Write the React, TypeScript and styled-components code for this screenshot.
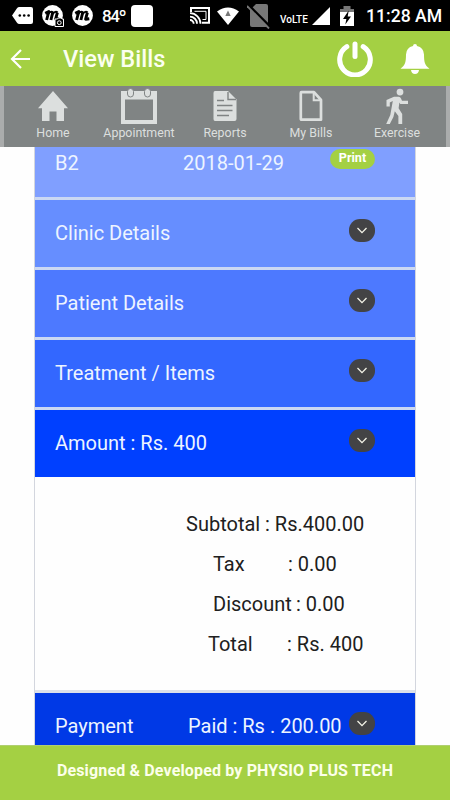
import React from 'react';
import styled, { createGlobalStyle } from 'styled-components';

const GlobalStyle = createGlobalStyle`
  * { box-sizing: border-box; }
  body { margin: 0; background: #fff; font-family: Roboto, sans-serif; }
  svg { display: block; flex: none; }
`;

const Screen = styled.div`
  width: 450px;
  height: 800px;
  display: flex;
  flex-direction: column;
  overflow: hidden;
  background: #fefefe;
`;

const StatusBar = styled.div`
  height: 31px;
  flex: none;
  display: flex;
  align-items: center;
  background: #000;
  color: #fff;
`;

const Slot = styled.div<{ $w: number; $gap: number }>`
  width: ${(p) => p.$w}px;
  margin-left: ${(p) => p.$gap}px;
  flex: none;
  white-space: nowrap;
`;

const Temperature = styled(Slot)`
  font-size: 17px;
  font-weight: 500;
  letter-spacing: -1.3px;
  line-height: 31px;
  padding-top: 2px;
`;

const Network = styled(Slot)`
  font-size: 10px;
  font-weight: 500;
  line-height: 31px;
  padding-top: 7px;
`;

const Clock = styled(Slot)`
  font-size: 17.6px;
  font-weight: 500;
  line-height: 31px;
  padding-top: 2px;
`;

const AppBar = styled.header`
  height: 55px;
  flex: none;
  display: flex;
  align-items: center;
  background: #a4d043;
  color: #fff;
  padding: 0 20px 0 10px;
`;

const Title = styled.h1`
  margin: 0 auto 0 33px;
  font-size: 23.6px;
  line-height: 54px;
  font-weight: 500;
  color: #fbfff0;
`;

const BarIcons = styled.div`
  display: flex;
  align-items: center;
  gap: 27px;
`;

const Nav = styled.nav`
  height: 61px;
  flex: none;
  display: grid;
  grid-template-columns: repeat(5, 86px);
  justify-content: center;
  background: #808484;
  border-left: 4px solid #aaacac;
  border-right: 4px solid #aaacac;
  padding: 2px 0 0;
`;

const NavItem = styled.div`
  display: flex;
  flex-direction: column;
  align-items: center;
  color: #dcdfde;
`;

const NavLabel = styled.span`
  margin-top: 1px;
  font-size: 12.4px;
  line-height: 16px;
  white-space: nowrap;
`;

const Content = styled.main`
  flex: 1;
  min-height: 0;
  overflow: hidden;
  padding: 0 34px;
`;

const BillList = styled.section`
  border: 1px solid #d3d6de;
  border-width: 0 1px;
`;

const BillRow = styled.div<{ $bg: string; $h: number; $top: number; $line?: boolean }>`
  height: ${(p) => p.$h}px;
  padding: ${(p) => p.$top}px 40px 0 20px;
  display: flex;
  align-items: flex-start;
  background: ${(p) => p.$bg};
  border-bottom: ${(p) => (p.$line ? '3px solid #cbd8f3' : 'none')};
  color: #edf4ff;
  font-size: 20px;
  line-height: 24px;
`;

const RowLabel = styled.span<{ $w?: number }>`
  width: ${(p) => (p.$w ? `${p.$w}px` : 'auto')};
  white-space: nowrap;
`;

const PrintBadge = styled.span`
  width: 45px;
  height: 20px;
  margin: -2px 0 0 auto;
  border-radius: 10px;
  background: #a4d043;
  color: #fff;
  font-size: 12.6px;
  font-weight: 700;
  line-height: 18px;
  text-align: center;
`;

const Toggle = styled.span`
  width: 26px;
  height: 23px;
  margin-left: auto;
  margin-top: -2px;
  flex: none;
  border-radius: 11px;
  background: #434345;
  display: flex;
  align-items: center;
  justify-content: center;
`;

const AmountPanel = styled.div`
  height: 216px;
  padding-top: 27px;
  background: #fefefe;
  border-bottom: 3px solid #dce1ea;
  color: #202020;
  font-size: 20px;
  line-height: 40px;
`;

const AmountLine = styled.div<{ $left: number }>`
  height: 40px;
  padding-left: ${(p) => p.$left}px;
  display: flex;
  white-space: nowrap;
`;

const AmountName = styled.span<{ $w: number }>`
  width: ${(p) => p.$w}px;
`;

const AmountValue = styled.span``;

const Footer = styled.footer`
  height: 55px;
  flex: none;
  background: #a4d043;
  border-top: 1px solid #b0cf70;
  color: #fcffea;
  font-size: 16px;
  font-weight: 700;
  letter-spacing: 0.15px;
  line-height: 50px;
  text-align: center;
  white-space: nowrap;
`;

const MGlyph = () => (
  <g fill="none" stroke="#000" strokeLinejoin="round">
    <path d="M3.2 8.3 6.8 6.6 4.6 15M10.8 7.2 8.9 15M15.4 7.5 13.6 14.2 17.3 13.7" strokeWidth="2.9" />
    <path d="M6 9Q9 5.6 11 7.4M10.3 9Q13.5 5.6 15.6 7.5" strokeWidth="2" />
  </g>
);

const Chevron = () => (
  <svg width="12" height="10" viewBox="0 0 12 10" fill="none">
    <path d="M1.5 2 6 6.6 10.5 2" stroke="#f4f4e8" strokeWidth="1.3" />
  </svg>
);

const HomeIcon = () => (
  <svg width="30" height="36" viewBox="0 0 30 36" fill="currentColor">
    <path d="M15 3 30 20.2H26V33H18.5V23.5H11.5V33H4V20.2H0Z" />
  </svg>
);

const CalendarIcon = () => (
  <svg width="36" height="36" viewBox="0 0 36 36">
    <path fill="currentColor" fillRule="evenodd" d="M0 3H36V36H0ZM4 11.5V32H32V11.5Z" />
    <rect x="6.5" y=".5" width="6" height="8.5" rx="3" fill="currentColor" stroke="#808484" />
    <rect x="23.5" y=".5" width="6" height="8.5" rx="3" fill="currentColor" stroke="#808484" />
  </svg>
);

const ReportIcon = () => (
  <svg width="24" height="36" viewBox="0 0 24 36">
    <path fill="currentColor" d="M2 3H15L23.5 11.5V31Q23.5 33 21.5 33H2Q.5 33 .5 31V5Q.5 3 2 3Z" />
    <path d="M15 4V11.5H23M4 12.5H11M4 17.5H19.5M4 22.5H19.5M4 27.5H16" fill="none" stroke="#808484" strokeWidth="1.4" />
  </svg>
);

const FileIcon = () => (
  <svg width="24" height="36" viewBox="0 0 24 36" fill="none" stroke="currentColor">
    <path d="M2.5 4.2H15L22 12V31.7H2.5Q1.8 31.7 1.8 31V5Q1.8 4.2 2.5 4.2Z" strokeWidth="2.7" strokeLinejoin="round" />
    <path d="M14.7 4.5V12.3H22" strokeWidth="2" />
  </svg>
);

const WalkIcon = () => (
  <svg width="24" height="36" viewBox="0 0 24 36" fill="currentColor">
    <circle cx="15" cy="4.1" r="3.4" />
    <path d="M9 8.8H13.6Q15.4 8.8 16 10.4L17 12.7H23V16H15.3L14.4 14.6L13.6 20.2L17.2 26V36H13.4V28L9.8 23.3L8.4 29L4.8 36H1.2L5.3 27L7.8 13L4.8 14.4V18.5H1.5V12Z" />
  </svg>
);

const navItems = [
  { label: 'Home', Icon: HomeIcon },
  { label: 'Appointment', Icon: CalendarIcon },
  { label: 'Reports', Icon: ReportIcon },
  { label: 'My Bills', Icon: FileIcon },
  { label: 'Exercise', Icon: WalkIcon },
];

const sections = [
  { label: 'Clinic Details', bg: '#668eff', h: 70, line: true },
  { label: 'Patient Details', bg: '#4d79ff', h: 70, line: true },
  { label: 'Treatment / Items', bg: '#3367ff', h: 70, line: true },
  { label: 'Amount : Rs. 400', bg: '#0040ff', h: 67, line: false },
];

export default function App() {
  return (
    <>
      <GlobalStyle />
      <Screen>
        <StatusBar>
          <Slot $w={21} $gap={12}>
            <svg width="21" height="17" viewBox="0 0 21 17">
              <path d="M0 8.5 5 1.3Q5.8 0 7.5 0H19Q21 0 21 2V15Q21 17 19 17H7.5Q5.8 17 5 15.7Z" fill="#fff" />
              <circle cx="7.8" cy="8.5" r="1.3" />
              <circle cx="12.2" cy="8.5" r="1.3" />
              <circle cx="16.6" cy="8.5" r="1.3" />
            </svg>
          </Slot>
          <Slot $w={22} $gap={9}>
            <svg width="22" height="22" viewBox="0 0 22 22">
              <circle cx="10.5" cy="10.5" r="10.4" fill="#fff" />
              <MGlyph />
              <path d="M13 14H15.5L16.2 13H19.3L20 14H21.5V21.5H13Z" fill="#000" stroke="#fff" />
              <circle cx="17.3" cy="17.7" r="1.9" fill="none" stroke="#fff" strokeWidth="1" />
            </svg>
          </Slot>
          <Slot $w={21} $gap={8}>
            <svg width="21" height="22" viewBox="0 0 21 22">
              <circle cx="10.5" cy="10.5" r="10.4" fill="#fff" />
              <MGlyph />
            </svg>
          </Slot>
          <Temperature $w={22} $gap={9}>84º</Temperature>
          <Slot $w={22} $gap={7}>
            <svg width="22" height="22"><rect width="22" height="22" rx="4" fill="#fff" /></svg>
          </Slot>
          <Slot $w={20} $gap={37}>
            <svg width="20" height="17" viewBox="0 0 20 17" fill="none" stroke="#fff">
              <path d="M1 5V1H19V15.7H12" strokeWidth="2" />
              <path d="M4.5 4.3H16V12.5H12.5" strokeWidth="1" />
              <path d="M0 6.2A10.5 10.5 0 0 1 10.5 16.7M0 9.7A7 7 0 0 1 7 16.7M0 13A3.7 3.7 0 0 1 3.7 16.7" strokeWidth="1.8" />
            </svg>
          </Slot>
          <Slot $w={22} $gap={7}>
            <svg width="22" height="18" viewBox="0 0 22 18">
              <path d="M0 4.5Q11-3.5 22 4.5L11 18Z" fill="#fff" />
              <path d="M8.3 9 11 3.5 13.7 9Z" fill="#777" />
            </svg>
          </Slot>
          <Slot $w={24} $gap={8}>
            <svg width="24" height="26" viewBox="0 0 24 26">
              <path d="M9 1H19Q21 1 21 3V22Q21 24 19 24H5Q3 24 3 22V7Z" fill="#777" />
              <path d="M1 1.5 24 24.5" stroke="#000" strokeWidth="2.5" />
              <path d="M0 3 22 25.5" stroke="#777" strokeWidth="1.8" />
            </svg>
          </Slot>
          <Network $w={29} $gap={9}>VoLTE</Network>
          <Slot $w={18} $gap={3}>
            <svg width="18" height="18"><path d="M18 0V18H0Z" fill="#fff" /></svg>
          </Slot>
          <Slot $w={14} $gap={10}>
            <svg width="14" height="20" viewBox="0 0 14 20">
              <path d="M0 7V3H3.5V0H10.5V3H14V7Z" fill="#777" />
              <path d="M0 6H14V20H0Z" fill="#fff" />
              <path d="M8.7 4.5 3 13H6.4L5.3 18.5 11 10.4H7.7Z" fill="#000" />
            </svg>
          </Slot>
          <Clock $w={78} $gap={12}>11:28 AM</Clock>
        </StatusBar>

        <AppBar>
          <svg width="20" height="20" viewBox="0 0 20 20" fill="none" stroke="#fff" strokeWidth="2.2">
            <path d="M11 1 2 10 11 19M2 10H20" />
          </svg>
          <Title>View Bills</Title>
          <BarIcons>
            <svg width="36" height="36" viewBox="0 0 36 36" fill="none" stroke="#fff" strokeLinecap="round">
              <path d="M9.8 5.7A15.3 15.3 0 1 0 26.2 5.7" strokeWidth="5" />
              <path d="M18 3V15.5" strokeWidth="5" />
            </svg>
            <svg width="30" height="32" viewBox="0 0 30 32" fill="#fff">
              <path d="M13 3Q13 1 15 1T17 3Q23.7 4.5 24 11.5C24.1 19 24.5 22 29.5 25.7H.5C5.5 22 5.9 19 6 11.5Q6.3 4.5 13 3Z" />
              <path d="M11 27H19Q18.5 31 15 31T11 27Z" />
            </svg>
          </BarIcons>
        </AppBar>

        <Nav>
          {navItems.map(({ label, Icon }) => (
            <NavItem key={label}>
              <Icon />
              <NavLabel>{label}</NavLabel>
            </NavItem>
          ))}
        </Nav>

        <Content>
          <BillList>
            <BillRow $bg="#809fff" $h={53} $top={4} $line>
              <RowLabel $w={128}>B2</RowLabel>
              <RowLabel>2018-01-29</RowLabel>
              <PrintBadge>Print</PrintBadge>
            </BillRow>
            {sections.map((s) => (
              <BillRow key={s.label} $bg={s.bg} $h={s.h} $top={21} $line={s.line}>
                <RowLabel>{s.label}</RowLabel>
                <Toggle><Chevron /></Toggle>
              </BillRow>
            ))}
            <AmountPanel>
              <AmountLine $left={151}>
                <AmountName $w={79}>Subtotal</AmountName>
                <AmountValue>: Rs.400.00</AmountValue>
              </AmountLine>
              <AmountLine $left={178}>
                <AmountName $w={75}>Tax</AmountName>
                <AmountValue>: 0.00</AmountValue>
              </AmountLine>
              <AmountLine $left={178}>
                <AmountName $w={83}>Discount</AmountName>
                <AmountValue>: 0.00</AmountValue>
              </AmountLine>
              <AmountLine $left={173}>
                <AmountName $w={79}>Total</AmountName>
                <AmountValue>: Rs. 400</AmountValue>
              </AmountLine>
            </AmountPanel>
            <BillRow $bg="#0039e6" $h={70} $top={21}>
              <RowLabel $w={133}>Payment</RowLabel>
              <RowLabel>Paid : Rs . 200.00</RowLabel>
              <Toggle><Chevron /></Toggle>
            </BillRow>
          </BillList>
        </Content>

        <Footer>Designed &amp; Developed by PHYSIO PLUS TECH</Footer>
      </Screen>
    </>
  );
}
